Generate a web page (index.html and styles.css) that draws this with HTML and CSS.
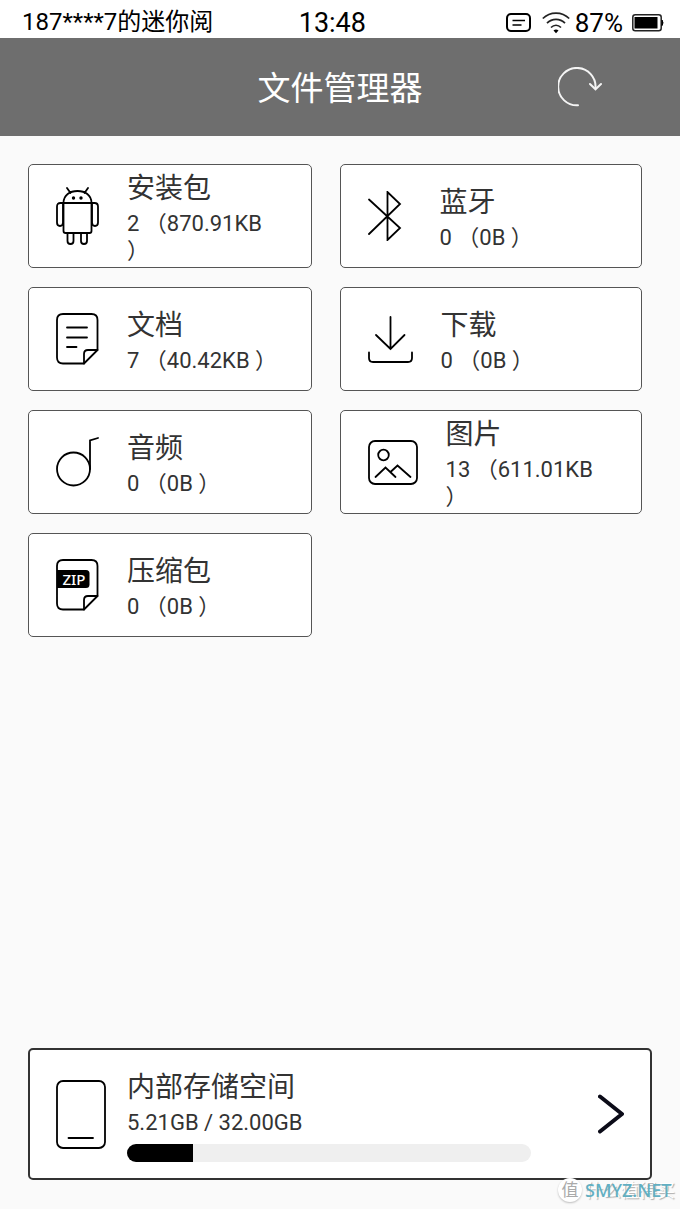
FILE: index.html
```
<!DOCTYPE html>
<html lang="zh-CN">
<head>
  <title>文件管理器</title>
  <meta charset="UTF-8">
  <meta name="viewport" content="width=device-width, initial-scale=1.0">
  <link rel="stylesheet" href="styles.css">
</head>
<body>
  <div class="status-bar">
    <span class="device-name">187****7的迷你阅</span>
    <span class="clock">13:48</span>
    <div class="status-icons">
      <svg class="icon-note" width="26" height="20" viewBox="0 0 26 20">
        <rect x="1" y="1" width="23" height="17" rx="4" fill="none" stroke="#000" stroke-width="2"/>
        <path d="M6.500 7.500h12.500M6.500 12h9" fill="none" stroke="#000" stroke-width="1.600"/>
      </svg>
      <svg class="icon-wifi" width="28" height="22" viewBox="0 0 28 22">
        <path d="M0.800 6.500C8 -0.700 20 -0.700 27.200 6.500M5 11.200C10 6 18 6 23 11.200M9 15.500C12 12.500 16 12.500 19 15.500" fill="none" stroke="#222" stroke-width="1.700"/>
        <path d="M11.500 18.500Q14 16.500 16.500 18.500L14 21.200z" fill="#000"/>
      </svg>
      <span class="battery-level">87%</span>
      <svg class="icon-battery" width="32" height="18" viewBox="0 0 32 18">
        <rect x="0.800" y="0.800" width="28.400" height="16" rx="2.500" fill="none" stroke="#222" stroke-width="1.500"/>
        <rect x="2.500" y="3" width="23" height="11.500" fill="#000"/>
        <path d="M30 6q2 2.800 0 5.600z" fill="#000" stroke="#000"/>
      </svg>
    </div>
  </div>

  <header class="title-bar">
    <h1>文件管理器</h1>
    <button class="refresh" type="button" aria-label="刷新">
      <svg width="44" height="40" viewBox="0 0 44 40">
        <path d="M20 38.300A18.700 18.700 0 1 1 37.500 21" fill="none" stroke="#f4f4f4" stroke-width="2" stroke-linecap="round"/>
        <path d="M32 17L37.500 22.300L43 17" fill="none" stroke="#f4f4f4" stroke-width="2" stroke-linecap="round"/>
      </svg>
    </button>
  </header>

  <main>
    <section class="categories">
      <a class="card" href="#apk">
        <svg width="43" height="58" viewBox="0 0 43 58" fill="none" stroke="#000" stroke-width="1.800" stroke-linecap="round">
          <path d="M11 1l3.500 5M32 1l-3.500 5M7.500 16C7.500 8 14 4 21.500 4S35.500 8 35.500 16"/>
          <path d="M7.500 16h28v28q0 2-2 2h-24q-2 0-2-2z"/>
          <path d="M7.500 16h-3q-3.500 0-3.500 3.500v16q0 3.500 3 3.500t3-3.500V16M35.500 16h3q3.500 0 3.500 3.500v16q0 3.500-3 3.500t-3-3.500V16"/>
          <path d="M11.500 46v8q0 3 3 3t3-3v-8M25 46v8q0 3 3 3t3-3v-8"/>
          <circle cx="17.500" cy="11" r="0.800" fill="#000"/>
          <circle cx="25" cy="11" r="0.800" fill="#000"/>
        </svg>
        <div class="card-text">
          <h2>安装包</h2>
          <p>2 （870.91KB ）</p>
        </div>
      </a>

      <a class="card" href="#bluetooth">
        <svg width="44" height="50" viewBox="0 0 44 50" fill="none" stroke="#000" stroke-width="1.800" stroke-linecap="round">
          <path d="M1 8.500L32 37L19.500 49V1L32 13L1 43"/>
        </svg>
        <div class="card-text">
          <h2>蓝牙</h2>
          <p>0 （0B ）</p>
        </div>
      </a>

      <a class="card" href="#documents">
        <svg width="43" height="52" viewBox="0 0 43 52" fill="none" stroke="#000" stroke-width="1.800" stroke-linecap="round" stroke-linejoin="round">
          <path d="M28 50.500H7q-6 0-6-6V7q0-6 6-6h28.500q6 0 6 6v30z"/>
          <path d="M28 50.500V41q0-4 4-4h9.500"/>
          <path d="M11 14.500h20M11 24.500h20M11 34h9.500"/>
        </svg>
        <div class="card-text">
          <h2>文档</h2>
          <p>7 （40.42KB ）</p>
        </div>
      </a>

      <a class="card" href="#downloads">
        <svg width="45" height="47" viewBox="0 0 45 47" fill="none" stroke="#000" stroke-width="1.800" stroke-linecap="round">
          <path d="M22.500 1v32M8 19l14.500 14L36.500 19"/>
          <path d="M1 36.500v5.500q0 4 4 4h35q4 0 4-4v-5.500"/>
        </svg>
        <div class="card-text">
          <h2>下载</h2>
          <p>0 （0B ）</p>
        </div>
      </a>

      <a class="card" href="#audio">
        <svg width="43" height="50" viewBox="0 0 43 50" fill="none" stroke="#000" stroke-width="1.800" stroke-linecap="round">
          <circle cx="17.500" cy="32" r="16.500"/>
          <path d="M34 32V3.500L42 1"/>
        </svg>
        <div class="card-text">
          <h2>音频</h2>
          <p>0 （0B ）</p>
        </div>
      </a>

      <a class="card" href="#pictures">
        <svg width="50" height="45" viewBox="0 0 50 45" fill="none" stroke="#000" stroke-width="1.800" stroke-linecap="round">
          <rect x="1" y="1" width="48" height="43" rx="6"/>
          <circle cx="15.500" cy="15" r="5.300"/>
          <path d="M7.500 37L17.500 27.500L27.500 37M22.500 32L29.500 25.500L42.500 37"/>
        </svg>
        <div class="card-text">
          <h2>图片</h2>
          <p>13 （611.01KB ）</p>
        </div>
      </a>

      <a class="card" href="#archives">
        <svg width="43" height="52" viewBox="0 0 43 52" fill="none" stroke="#000" stroke-width="1.800" stroke-linecap="round" stroke-linejoin="round">
          <path d="M28 50.500H7q-6 0-6-6V7q0-6 6-6h28.500q6 0 6 6v30z"/>
          <path d="M28 50.500V41q0-4 4-4h9.500"/>
          <path d="M1 11h29q3.500 0 3.500 3.500v11q0 3.500-3.500 3.500H1z" fill="#000" stroke="none"/>
          <text class="zip-label" x="18" y="26" text-anchor="middle">ZIP</text>
        </svg>
        <div class="card-text">
          <h2>压缩包</h2>
          <p>0 （0B ）</p>
        </div>
      </a>
    </section>

    <a class="storage" href="#internal">
      <svg width="50" height="69" viewBox="0 0 50 69" fill="none" stroke="#000" stroke-width="1.800" stroke-linecap="round">
        <rect x="1" y="1" width="48" height="67" rx="6"/>
        <path d="M12.500 58h24.500"/>
      </svg>
      <div class="storage-text">
        <h2>内部存储空间</h2>
        <p id="storage-label">5.21GB / 32.00GB</p>
        <progress aria-labelledby="storage-label" value="5.21" max="32"></progress>
      </div>
      <svg width="26" height="40" viewBox="0 0 26 40">
        <path d="M2 2.500L24 20L2 37.500" fill="none" stroke="#0b0b18" stroke-width="4" stroke-linecap="round" stroke-linejoin="round"/>
      </svg>
    </a>
  </main>

  <div class="watermark">
    <span class="badge">值</span>
    <span class="site-cn">什么值得买</span>
    <span class="site-url">SMYZ.NET</span>
  </div>
</body>
</html>
```
FILE: styles.css
```
* {
  box-sizing: border-box;
}

body {
  margin: 0;
  min-height: 100vh;
  display: flex;
  flex-direction: column;
  position: relative;
  font-family: Roboto, "Noto Sans CJK SC", sans-serif;
  color: #333;
  background: #fafafa;
}

h1, h2, p {
  margin: 0;
  font-weight: 400;
}

svg {
  display: block;
  flex: none;
}

/* Status bar */
.status-bar {
  display: grid;
  grid-template-columns: 13fr auto 14fr;
  align-items: center;
  height: 38px;
  padding: 8px 16px 0 22px;
  color: #000;
  background: #fff;
}

.device-name {
  font-size: 24px;
  line-height: 28px;
  padding-bottom: 2px;
  white-space: nowrap;
}

.clock {
  font-size: 27px;
  line-height: 30px;
}

.status-icons {
  display: flex;
  align-items: center;
  justify-content: flex-end;
}

.icon-note {
  margin-right: 10px;
}

.icon-wifi {
  margin-right: 5px;
}

.battery-level {
  font-size: 26px;
  line-height: 30px;
  margin-right: 9px;
}

/* Title bar */
.title-bar {
  display: grid;
  grid-template-columns: 1fr auto 1fr;
  align-items: center;
  height: 98px;
  color: #fff;
  background: #6e6e6e;
}

.title-bar h1 {
  grid-column: 2;
  padding-top: 4px;
  font-size: 33px;
  line-height: 48px;
}

.refresh {
  justify-self: end;
  margin-right: 78px;
  padding: 0;
  border: none;
  background: none;
  cursor: pointer;
}

/* Categories */
main {
  flex: 1;
  display: flex;
  flex-direction: column;
  justify-content: space-between;
  padding: 28px 28px 29px;
}

.categories {
  display: grid;
  grid-template-columns: 284fr 303fr;
  grid-auto-rows: 104px;
  gap: 19px 28px;
  padding-right: 10px;
}

.card, .storage {
  display: flex;
  align-items: center;
  color: #333;
  text-decoration: none;
  background: #fff;
  border: 1px solid #555;
  border-radius: 5px;
}

.card {
  gap: 28px;
  padding: 0 27px;
}

h2 {
  font-size: 28px;
  line-height: 42px;
}

p {
  font-size: 22px;
  line-height: 27px;
  text-spacing-trim: space-all;
}

.zip-label {
  font-family: "Noto Sans", sans-serif;
  font-size: 15px;
  font-weight: 500;
  fill: #fff;
  stroke: none;
}

/* Storage */
.storage {
  height: 132px;
  padding: 0 26px;
  border: 2px solid #333;
}

.storage-text {
  flex: 1;
  margin: 0 67px 0 21px;
}

progress {
  display: block;
  width: 100%;
  height: 18px;
  margin-top: 8px;
  border: none;
  border-radius: 9px;
  overflow: hidden;
  appearance: none;
  background: #efefef;
}

progress::-webkit-progress-bar {
  background: #efefef;
}

progress::-webkit-progress-value {
  background: #000;
}

/* Watermark */
.watermark {
  position: absolute;
  right: 5px;
  bottom: 4px;
  display: grid;
  grid-template-columns: 24px auto;
  align-items: center;
  column-gap: 3px;
  line-height: 28px;
}

.badge {
  width: 24px;
  height: 24px;
  border-radius: 50%;
  color: #aaa;
  background: #fff;
  box-shadow: 0 1px 2px #bbb;
  font-size: 17px;
  line-height: 24px;
  text-align: center;
}

.site-cn, .site-url {
  grid-row: 1;
  grid-column: 2;
}

.site-cn {
  padding-top: 3px;
  color: #fff;
  font-size: 18px;
  text-shadow: 1px 1px 1px #aaa;
}

.site-url {
  color: #62afc2;
  font-family: "Noto Sans", sans-serif;
  font-size: 18px;
  font-weight: 500;
}
```
